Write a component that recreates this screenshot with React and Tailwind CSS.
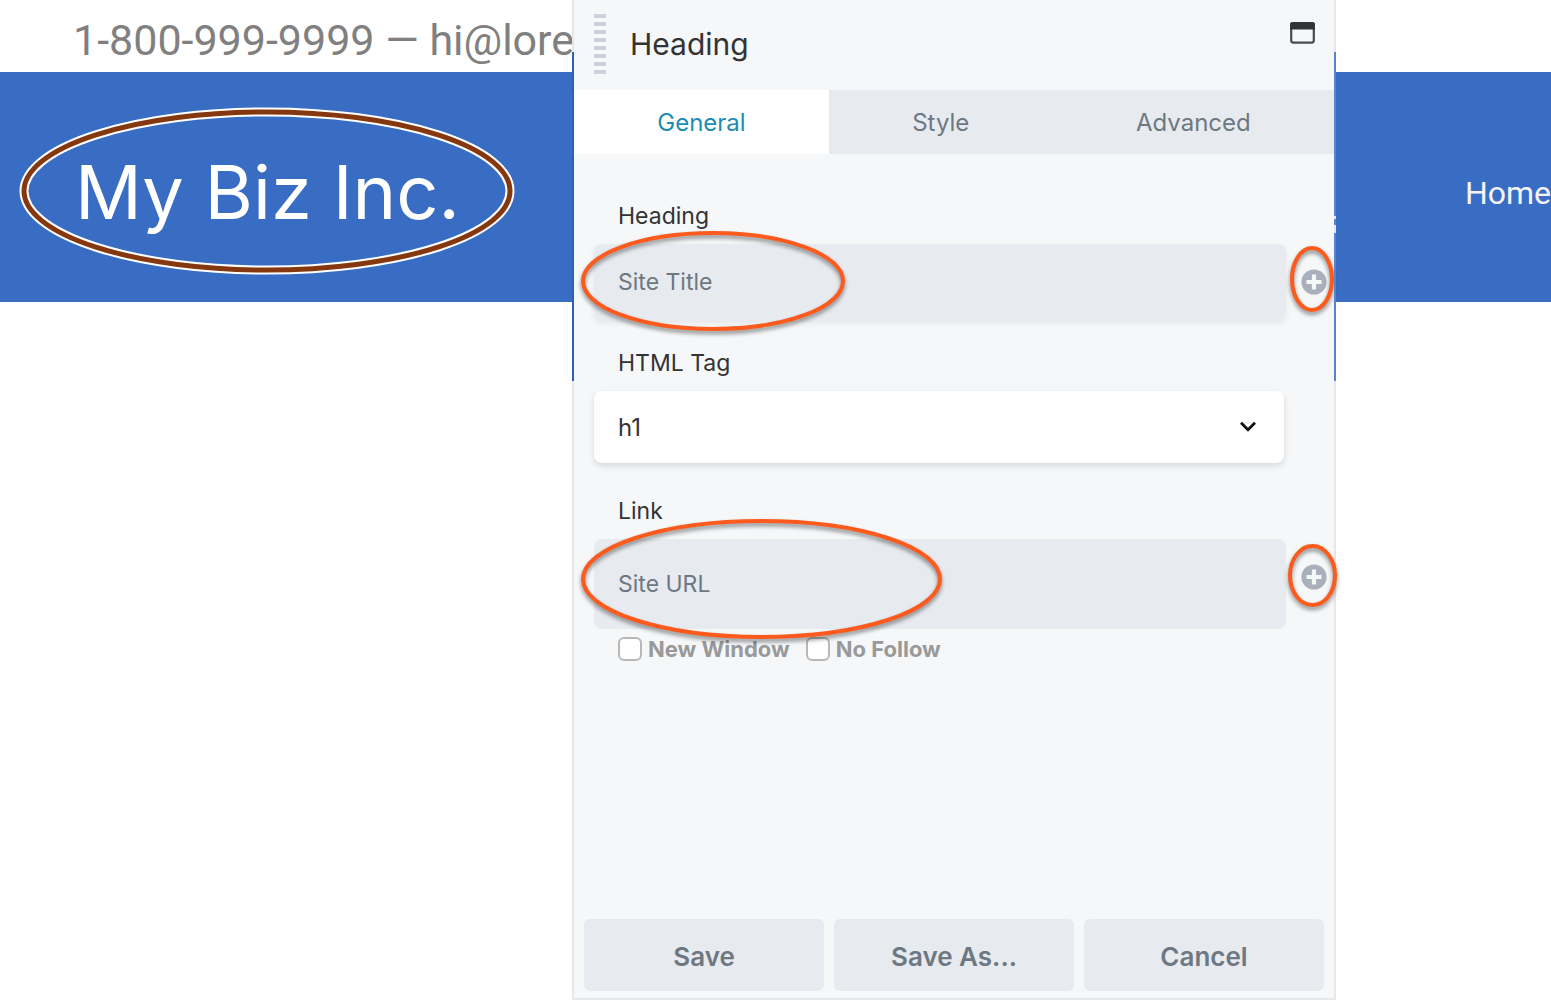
import React, { useState } from 'react';

const tabs = ['General', 'Style', 'Advanced'];

const Ring = ({ className, width, height }) => (
  <svg
    className={`pointer-events-none absolute overflow-visible drop-shadow-[0_3px_2px_rgba(0,0,0,0.45)] ${className}`}
    width={width}
    height={height}
    aria-hidden="true"
  >
    <ellipse
      cx={width / 2}
      cy={height / 2}
      rx={width / 2 - 2}
      ry={height / 2 - 2}
      fill="none"
      stroke="#fd5a1e"
      strokeWidth="4"
    />
  </svg>
);

const PlusIcon = () => (
  <svg width="26" height="26" viewBox="0 0 26 26" aria-hidden="true">
    <circle cx="13" cy="13" r="12.6" fill="#a9b0bb" />
    <path d="M13 5.5v15M5.5 13h15" stroke="#f5f7f9" strokeWidth="4.2" />
  </svg>
);

const WindowIcon = () => (
  <svg width="26" height="22" viewBox="0 0 26 22" aria-hidden="true">
    <rect x="1.2" y="1.2" width="22.6" height="19.4" rx="2" fill="none" stroke="#4a4b4c" strokeWidth="2.2" />
    <path d="M0 7.5V2.3A2 2 0 0 1 2 0.3h21a2 2 0 0 1 2 2v5.2z" fill="#333435" />
  </svg>
);

const SiteHeader = () => (
  <header className="overflow-hidden">
    <div className="h-[72px] w-[572px] overflow-hidden pl-[73px] font-['Roboto',sans-serif] text-[43px] leading-[80px] whitespace-nowrap text-[#808080]">
      1-800-999-9999 — hi@lorem
    </div>
    <div className="flex h-[230px] items-center justify-between bg-[#396dc3]">
      <div className="relative pt-[10px] pl-[75px]">
        <h1 className="font-['Inter',sans-serif] text-[74px] leading-[88px] whitespace-nowrap text-white">
          My Biz Inc.
        </h1>
        <svg
          className="pointer-events-none absolute -top-[31px] left-[19px]"
          width="496"
          height="168"
          aria-hidden="true"
        >
          <ellipse cx="248" cy="84" rx="243" ry="79" fill="none" stroke="#fff" strokeWidth="9" />
          <ellipse cx="248" cy="84" rx="243" ry="79" fill="none" stroke="#853810" strokeWidth="5" />
        </svg>
      </div>
      <nav className="pt-3">
        <a href="#home" className="font-['Roboto',sans-serif] text-[32px] leading-10 text-[#f4f4f4]">
          Home
        </a>
      </nav>
    </div>
  </header>
);

const PanelEdge = ({ className, children }) => (
  <div className={`absolute top-[52px] h-[329px] w-[2px] ${className}`}>{children}</div>
);

const labelClass = 'mb-3 block pl-11 text-[23px] leading-8 text-[#333]';
const fieldClass = 'block w-full rounded-lg bg-[#e7eaef] px-6 text-[23px] text-[#6d7882] outline-none';

const ConnectedField = ({ id, label, value, inputClass, ringClass, ringWidth, ringHeight, plusRing }) => (
  <>
    <label htmlFor={id} className={labelClass}>{label}</label>
    <div className="flex pl-5">
      <div className="relative flex-1">
        <input id={id} type="text" defaultValue={value} className={`${fieldClass} ${inputClass}`} />
        <Ring className={ringClass} width={ringWidth} height={ringHeight} />
      </div>
      <div className="relative w-12 pt-[25px] pl-[15px]">
        <button type="button" aria-label={`Connect ${label}`} className="block">
          <PlusIcon />
        </button>
        {plusRing}
      </div>
    </div>
  </>
);

const SettingsPanel = () => {
  const [active, setActive] = useState('General');

  return (
    <section className="absolute inset-y-0 right-[215px] left-[572px] flex flex-col border-x-2 border-b-2 border-[#e6e7e9] bg-[#f5f7f9] font-['Inter',sans-serif]">
      <div className="flex h-[90px] shrink-0 items-start justify-between pr-[18px] pl-5">
        <div className="flex gap-6">
          <div className="mt-[14px] flex w-3 flex-col gap-1">
            {Array.from({ length: 8 }).map((_, i) => (
              <span key={i} className="h-1 bg-[#cbd2dc]" />
            ))}
          </div>
          <h2 className="mt-6 text-[30px] leading-10 text-[#333]">Heading</h2>
        </div>
        <button type="button" aria-label="Toggle window" className="mt-[22px]">
          <WindowIcon />
        </button>
      </div>

      <div role="tablist" className="flex h-16 shrink-0 bg-[#e7eaef]">
        {tabs.map((tab) => (
          <button
            key={tab}
            type="button"
            role="tab"
            aria-selected={active === tab}
            onClick={() => setActive(tab)}
            className={`flex-auto pt-[2px] text-[24px] ${active === tab ? 'bg-white text-[#1c8db3]' : 'text-[#6d7882]'}`}
          >
            {tab}
          </button>
        ))}
      </div>

      <form className="flex flex-1 flex-col pt-[46px]" onSubmit={(e) => e.preventDefault()}>
        <ConnectedField
          id="heading"
          label="Heading"
          value="Site Title"
          inputClass="h-[76px] shadow-[0_3px_6px_rgba(0,0,0,0.07)]"
          ringClass="-top-[13px] -left-[13px]"
          ringWidth={264}
          ringHeight={100}
          plusRing={<Ring className="top-[2px] left-1" width={44} height={66} />}
        />

        <div className="mt-[27px]">
          <label htmlFor="tag" className={labelClass}>HTML Tag</label>
          <div className="relative mr-[50px] ml-5">
            <select
              id="tag"
              defaultValue="h1"
              className="block h-[72px] w-full appearance-none rounded-lg bg-white px-6 pt-[2px] text-[24px] text-[#333] shadow-[0_3px_6px_rgba(0,0,0,0.12)] outline-none"
            >
              <option>h1</option>
              <option>h2</option>
              <option>h3</option>
            </select>
            <svg className="pointer-events-none absolute top-[30px] right-7" width="16" height="12" viewBox="0 0 16 12" aria-hidden="true">
              <path d="M1 1.8l7 7 7-7" fill="none" stroke="#111" strokeWidth="2.8" />
            </svg>
          </div>
        </div>

        <div className="mt-8">
          <ConnectedField
            id="link"
            label="Link"
            value="Site URL"
            inputClass="h-[90px]"
            ringClass="-top-5 -left-[13px]"
            ringWidth={361}
            ringHeight={120}
            plusRing={<Ring className="top-[5px] left-[2px]" width={49} height={63} />}
          />
          <div className="mt-2 flex gap-4 pl-11 text-[22px] leading-6 font-bold text-[#999]">
            {['New Window', 'No Follow'].map((option) => (
              <label key={option} className="flex items-center gap-[6px]">
                <input
                  type="checkbox"
                  className="size-6 appearance-none rounded-md border-2 border-[#b8b8b8] bg-white checked:bg-[#1c8db3]"
                />
                {option}
              </label>
            ))}
          </div>
        </div>

        <div className="mt-auto flex gap-[10px] px-[10px] pb-[7px]">
          {['Save', 'Save As...', 'Cancel'].map((action) => (
            <button
              key={action}
              type="button"
              className="h-[72px] flex-1 rounded-md bg-[#e7eaef] pt-[2px] text-[26px] font-semibold text-[#6d7882]"
            >
              {action}
            </button>
          ))}
        </div>
      </form>

      <PanelEdge className="-left-[2px] bg-[#2b62b6]" />
      <PanelEdge className="-right-[2px] flex flex-col gap-[6px] bg-[#5984cb] pt-[164px]">
        <span className="h-[3px] bg-[#e6e9ee]" />
        <span className="h-2 bg-[#e6e9ee]" />
      </PanelEdge>
    </section>
  );
};

export default function App() {
  return (
    <main className="relative min-h-screen overflow-hidden bg-white">
      <SiteHeader />
      <SettingsPanel />
    </main>
  );
}
